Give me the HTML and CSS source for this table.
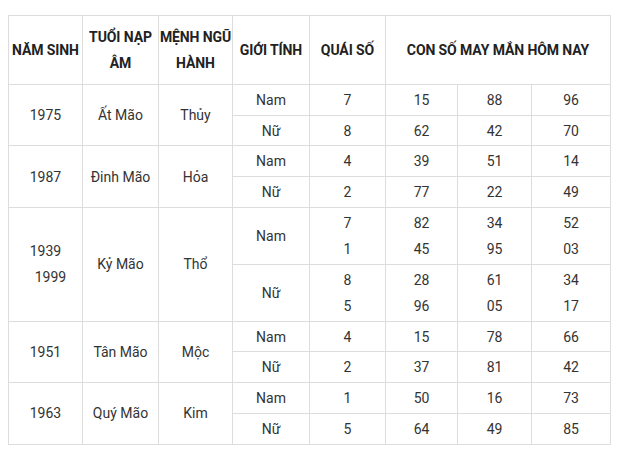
FILE: index.html
```html
<!DOCTYPE html>
<html lang="vi">
<head>
<meta charset="utf-8">
<link rel="stylesheet" href="styles.css">
</head>
<body>
<table class="lucky">
  <colgroup>
    <col class="c1"><col class="c2"><col class="c3"><col class="c4"><col class="c5"><col class="c6"><col class="c7"><col class="c8">
  </colgroup>
  <thead>
    <tr>
      <th>NĂM SINH</th>
      <th>TUỔI NẠP ÂM</th>
      <th>MỆNH NGŨ HÀNH</th>
      <th>GIỚI TÍNH</th>
      <th>QUÁI SỐ</th>
      <th colspan="3">CON SỐ MAY MẮN HÔM NAY</th>
    </tr>
  </thead>
  <tbody>
    <tr><td rowspan="2">1975</td><td rowspan="2">Ất Mão</td><td rowspan="2">Thủy</td><td>Nam</td><td>7</td><td>15</td><td>88</td><td>96</td></tr>
    <tr><td>Nữ</td><td>8</td><td>62</td><td>42</td><td>70</td></tr>
    <tr><td rowspan="2">1987</td><td rowspan="2">Đinh Mão</td><td rowspan="2">Hỏa</td><td>Nam</td><td>4</td><td>39</td><td>51</td><td>14</td></tr>
    <tr><td>Nữ</td><td>2</td><td>77</td><td>22</td><td>49</td></tr>
    <tr class="tall"><td rowspan="2">1939<br><span class="shift">1999</span></td><td rowspan="2">Kỷ Mão</td><td rowspan="2">Thổ</td><td>Nam</td><td>7<br>1</td><td>82<br>45</td><td>34<br>95</td><td>52<br>03</td></tr>
    <tr class="tall"><td>Nữ</td><td>8<br>5</td><td>28<br>96</td><td>61<br>05</td><td>34<br>17</td></tr>
    <tr><td rowspan="2">1951</td><td rowspan="2">Tân Mão</td><td rowspan="2">Mộc</td><td>Nam</td><td>4</td><td>15</td><td>78</td><td>66</td></tr>
    <tr><td>Nữ</td><td>2</td><td>37</td><td>81</td><td>42</td></tr>
    <tr><td rowspan="2">1963</td><td rowspan="2">Quý Mão</td><td rowspan="2">Kim</td><td>Nam</td><td>1</td><td>50</td><td>16</td><td>73</td></tr>
    <tr><td>Nữ</td><td>5</td><td>64</td><td>49</td><td>85</td></tr>
  </tbody>
</table>
</body>
</html>
```
FILE: styles.css
```css
html, body {
  margin: 0;
  padding: 0;
  background: #fff;
}
body {
  padding: 15px 8px;
  font-family: Roboto, "Liberation Sans", sans-serif;
  font-size: 14px;
  color: #333;
}
.lucky {
  border-collapse: collapse;
  table-layout: fixed;
  width: 602px;
}
.c1 { width: 74px; }
.c2 { width: 76px; }
.c3 { width: 74px; }
.c4 { width: 77px; }
.c5 { width: 76px; }
.c6 { width: 72px; }
.c7 { width: 74px; }
.c8 { width: 79px; }
.lucky th,
.lucky td {
  border: 1px solid #ddd;
  text-align: center;
  vertical-align: middle;
  line-height: 26px;
  padding: 0;
}
.lucky th {
  font-weight: bold;
  color: #222;
  height: 52px;
  padding: 8px 0;
  letter-spacing: -0.1px;
}
.lucky tbody tr {
  height: 30.7px;
}
.lucky tbody tr.tall {
  height: 57px;
}
.shift {
  display: inline-block;
  padding-left: 10px;
}
```
